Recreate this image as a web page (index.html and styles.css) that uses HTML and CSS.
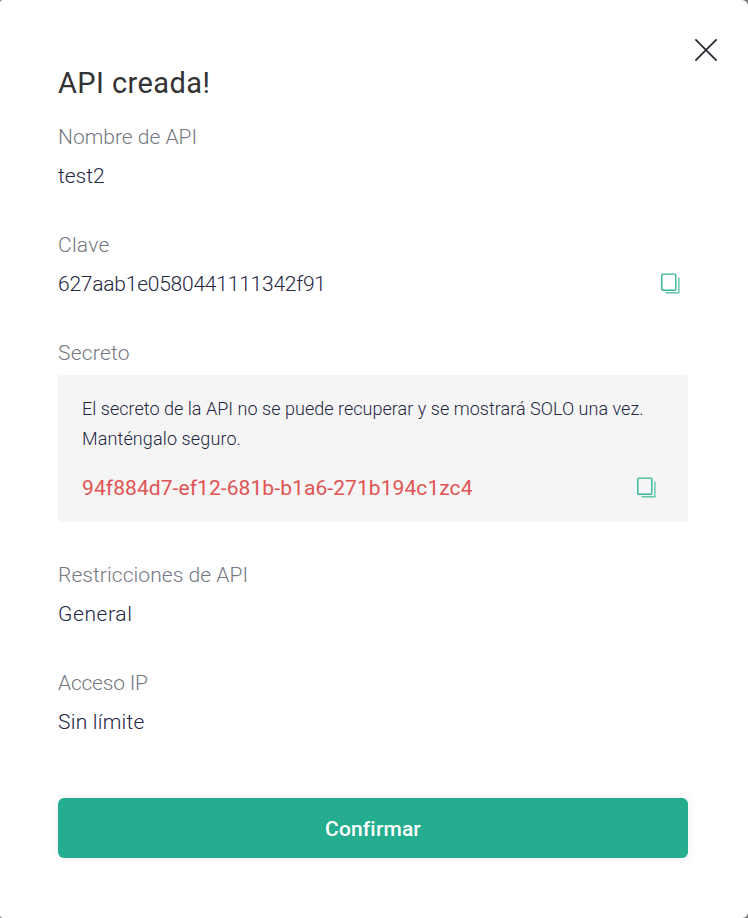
FILE: index.html
```html
<!DOCTYPE html>
<html lang="es">
<head>
<meta charset="utf-8">
<title>API creada</title>
<link rel="stylesheet" href="styles.css">
</head>
<body>
<main class="dialog">
  <button class="close" aria-label="Cerrar"><svg width="24" height="24" viewBox="0 0 24 24"><path d="M1.4 1.4L22.6 22.6M22.6 1.4L1.4 22.6"/></svg></button>
  <h1 class="title"><span>API creada!</span></h1>
  <section class="field">
    <div class="label"><span class="l-name">Nombre de API</span></div>
    <div class="value"><span class="v-name">test2</span></div>
  </section>
  <section class="field">
    <div class="label"><span class="l-key">Clave</span></div>
    <div class="value"><span class="v-key">627aab1e0580441111342f91</span>
      <svg class="copy" width="20" height="22" viewBox="0 0 20 22"><rect x="1.8" y="1.1" width="14" height="16.2" rx="1"/><path class="back" d="M18.9 4.5V19.7H5.5"/></svg></div>
  </section>
  <section class="field secret">
    <div class="label"><span class="l-secret">Secreto</span></div>
    <div class="notice">
      <p><span class="n-first">El secreto de la API no se puede recuperar y se mostrará SOLO una vez.</span><br><span class="n-second">Manténgalo seguro.</span></p>
      <div class="value code"><span class="v-secret">94f884d7-ef12-681b-b1a6-271b194c1zc4</span>
        <svg class="copy" width="20" height="22" viewBox="0 0 20 22"><rect x="1.8" y="1.1" width="14" height="16.2" rx="1"/><path class="back" d="M18.9 4.5V19.7H5.5"/></svg></div>
    </div>
  </section>
  <section class="field">
    <div class="label"><span class="l-limits">Restricciones de API</span></div>
    <div class="value"><span class="v-limits">General</span></div>
  </section>
  <section class="field">
    <div class="label"><span class="l-ip">Acceso IP</span></div>
    <div class="value"><span class="v-ip">Sin límite</span></div>
  </section>
  <button class="confirm"><span>Confirmar</span></button>
</main>
</body>
</html>
```
FILE: styles.css
```css
* { box-sizing: border-box; }
body { margin: 0; background: #777; font-family: Roboto, "Liberation Sans", sans-serif; font-weight: 300; }
.dialog { position: relative; height: 918px; padding: 63px 60px 0 58px; background: #fff; border-radius: 3px 6px 6px 3px; }
.close { position: absolute; top: 38px; right: 30px; width: 24px; height: 24px; padding: 0; border: 0; background: none; }
.close svg { display: block; fill: none; stroke: #25272d; stroke-width: 1.7; }
.title { margin: 0 0 19px; font-size: 29px; line-height: 40px; font-weight: 400; color: #333; letter-spacing: .42px; }
.field { margin-bottom: 39px; }
.label { font-size: 21px; line-height: 30px; color: #757783; white-space: nowrap; }
.value { display: flex; justify-content: space-between; align-items: center; height: 30px; margin-top: 9px; padding-right: 8px; font-size: 21px; line-height: 30px; color: #24263f; white-space: nowrap; }
.copy { fill: none; stroke: #35b395; stroke-width: 1.4; }
.copy .back { stroke: #62c5ad; }
.notice { height: 147px; margin-top: 7px; padding: 19px 24px; background: #f5f5f5; border-radius: 3px; }
.notice p { margin: 0 0 19px; font-size: 18px; line-height: 30px; color: #24263f; white-space: nowrap; }
.secret { margin-bottom: 38px; }
.code { margin-top: 0; color: #e05353; font-weight: 400; }
.l-key { letter-spacing: .25px; }
.v-key { letter-spacing: -.23px; }
.l-secret { letter-spacing: .22px; }
.n-first { letter-spacing: .03px; }
.n-second { letter-spacing: .12px; }
.v-secret { letter-spacing: .08px; }
.l-limits { letter-spacing: .06px; }
.v-limits { letter-spacing: .6px; }
.l-ip { letter-spacing: -.22px; }
.v-ip { letter-spacing: .25px; }
.confirm { display: block; width: 630px; height: 60px; margin-top: 61px; border: 0; padding: 1px 0 0; border-radius: 6px; background: #25ad8f; color: #fff; font: 500 21px/60px Roboto, sans-serif; letter-spacing: .15px; box-shadow: 0 0 12px rgba(0,0,0,.07); }
```
